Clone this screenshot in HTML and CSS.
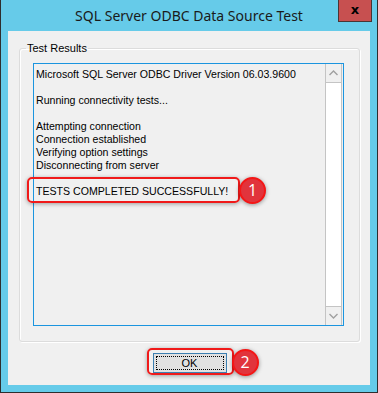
FILE: index.html
```html
<!DOCTYPE html>
<html lang="en">

<head>
  <meta charset="UTF-8">
  <title>SQL Server ODBC Data Source Test</title>
  <link rel="stylesheet" href="styles.css">
</head>

<body>
  <div class="window">
    <div class="titlebar">
      <span class="title">SQL Server ODBC Data Source Test</span>
      <button class="close">x</button>
    </div>

    <div class="client">
      <fieldset class="group">
        <legend>Test Results</legend>

        <div class="results">
          <div class="lines">
            <div>Microsoft SQL Server ODBC Driver Version 06.03.9600</div>
            <div>&nbsp;</div>
            <div>Running connectivity tests...</div>
            <div>&nbsp;</div>
            <div>Attempting connection</div>
            <div>Connection established</div>
            <div>Verifying option settings</div>
            <div>Disconnecting from server</div>
            <div>&nbsp;</div>
            <div>TESTS COMPLETED SUCCESSFULLY!</div>
          </div>
          <div class="scrollbar">
            <div class="arrow">
              <svg width="9" height="6" viewBox="0 0 9 6"><path d="M0.5 5 L4.5 1 L8.5 5" fill="none" stroke="#a0a0a0" stroke-width="1.4"/></svg>
            </div>
            <div class="track"></div>
            <div class="arrow">
              <svg width="9" height="6" viewBox="0 0 9 6"><path d="M0.5 1 L4.5 5 L8.5 1" fill="none" stroke="#a0a0a0" stroke-width="1.4"/></svg>
            </div>
          </div>

          <!-- callout 1 -->
          <div class="mark mark-result"></div>
          <div class="badge badge-1">1</div>
        </div>
      </fieldset>

      <div class="actions">
        <div class="ok-wrap">
          <button class="ok"><span>OK</span></button>
          <div class="badge badge-2">2</div>
        </div>
      </div>
    </div>
  </div>
</body>

</html>
```

FILE: styles.css
```css
* {
  box-sizing: border-box;
}

body {
  margin: 0;
  font-family: "Liberation Sans", Arial, sans-serif;
  font-size: 11px;
  color: #000;
}

.window {
  width: 378px;
  height: 393px;
  background-color: #66cbe9;
  border: 1px solid #2e2e2e;
  border-top: none;
  display: flex;
  flex-direction: column;
}

.titlebar {
  position: relative;
  height: 31px;
  display: flex;
  align-items: center;
  justify-content: center;
}

.title {
  font-family: "Noto Sans", sans-serif;
  font-size: 14px;
  color: #1a1a1a;
  padding-bottom: 1px;
}

.close {
  position: absolute;
  top: 0;
  right: 5px;
  width: 34px;
  height: 22px;
  margin: 0;
  padding: 0 0 3px;
  background-color: #c75050;
  border: 1px solid #4a3434;
  border-top: none;
  font-family: "DejaVu Sans", sans-serif;
  font-size: 13px;
  font-weight: bold;
  color: #000;
  line-height: 1;
}

.client {
  flex: 1;
  margin: 0 7px 7px;
  background-color: #f0f0f0;
  display: flex;
  flex-direction: column;
  padding: 11px 10px 0 11px;
}

.group {
  margin: 0;
  height: 300px;
  border: 1px solid #dcdcdc;
  border-radius: 3px;
  padding: 8px 15px 14px 13px;
  box-shadow: inset 1px 1px 0 #fff, 1px 1px 0 #fff;
}

.group legend {
  padding: 0 1px;
  margin-left: -7px;
  font-size: 11px;
  line-height: 13px;
}

.results {
  position: relative;
  height: 263px;
  border: 1px solid #1b95df;
  display: flex;
}

.lines {
  flex: 1;
  padding: 4px 2px 0;
  font-size: 10.6px;
  line-height: 13px;
  white-space: nowrap;
}

.scrollbar {
  width: 17px;
  margin-right: 1px;
  display: flex;
  flex-direction: column;
  background-color: #fff;
  border-left: 1px solid #c4c4c4;
  border-right: 1px solid #c4c4c4;
}

.arrow {
  height: 19px;
  display: flex;
  align-items: center;
  justify-content: center;
  background-color: #f0f0f0;
  border: 1px solid #c4c4c4;
  border-left: none;
  border-right: none;
}

.arrow:first-child {
  border-top: none;
}

.arrow:last-child {
  border-bottom: none;
}

.track {
  flex: 1;
}

.mark {
  position: absolute;
  border: 2px solid #f01a1a;
  border-radius: 5px;
  box-shadow: 0 1px 4px rgba(0, 0, 0, 0.35);
}

.mark-result {
  left: -7px;
  top: 113px;
  width: 213px;
  height: 26px;
}

.badge {
  position: absolute;
  width: 27px;
  height: 27px;
  border-radius: 50%;
  background-color: #e1343c;
  border: 2px solid #f41616;
  box-shadow: 0 1px 4px rgba(0, 0, 0, 0.4);
  color: #fff;
  font-family: "Open Sans", sans-serif;
  font-size: 16px;
  line-height: 23px;
  text-align: center;
}

.badge-1 {
  left: 205px;
  top: 113px;
}

.actions {
  flex: 1;
  display: flex;
  justify-content: center;
  padding-top: 6px;
}

.ok-wrap {
  position: relative;
  height: 27px;
  padding: 5px;
  border: 2px solid #f01a1a;
  border-radius: 5px;
  box-shadow: 0 1px 4px rgba(0, 0, 0, 0.35);
  margin-left: 1px;
}

.ok {
  display: block;
  width: 74px;
  height: 20px;
  margin: -2px 0 0 -1px;
  padding: 2px;
  background-color: #e1e1e1;
  border: 1px solid #3c7fb1;
  font-family: "Liberation Sans", Arial, sans-serif;
  font-size: 11px;
  color: #000;
}

.ok span {
  display: block;
  height: 100%;
  border: 1px dotted #000;
  line-height: 12px;
}

.badge-2 {
  left: 83px;
  top: -1px;
}
```
